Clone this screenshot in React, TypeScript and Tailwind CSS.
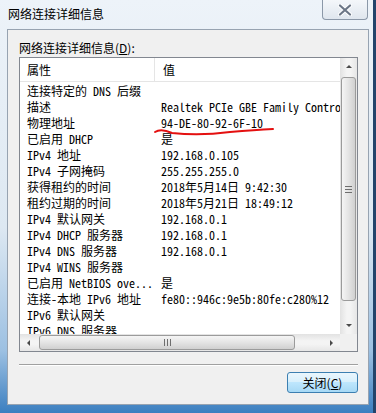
const rows: [string, string][] = [
  ["连接特定的 DNS 后缀", ""],
  ["描述", "Realtek PCIe GBE Family Controller"],
  ["物理地址", "94-DE-80-92-6F-10"],
  ["已启用 DHCP", "是"],
  ["IPv4 地址", "192.168.0.105"],
  ["IPv4 子网掩码", "255.255.255.0"],
  ["获得租约的时间", "2018年5月14日 9:42:30"],
  ["租约过期的时间", "2018年5月21日 18:49:12"],
  ["IPv4 默认网关", "192.168.0.1"],
  ["IPv4 DHCP 服务器", "192.168.0.1"],
  ["IPv4 DNS 服务器", "192.168.0.1"],
  ["IPv4 WINS 服务器", ""],
  ["已启用 NetBIOS ove...", "是"],
  ["连接-本地 IPv6 地址", "fe80::946c:9e5b:80fe:c280%12"],
  ["IPv6 默认网关", ""],
  ["IPv6 DNS 服务器", ""],
];

const ui = "font-['Noto_Sans_CJK_SC',sans-serif]";
const mono = "font-['Noto_Sans_Mono_CJK_SC','Noto_Sans_CJK_SC',monospace]";

function Arrow({ dir }: { dir: "up" | "down" | "left" | "right" }) {
  const pts = {
    up: "1,5 4,2 7,5",
    down: "1,2 4,5 7,2",
    left: "5,1 2,4 5,7",
    right: "2,1 5,4 2,7",
  }[dir];
  return (
    <svg width="8" height="8" viewBox="0 0 8 8">
      <polygon points={pts} fill="#4a4a4a" />
    </svg>
  );
}

export default function App() {
  return (
    <div
      className={`relative flex h-[413px] w-[376px] flex-col overflow-hidden border-r-[3px] border-r-[#23446b] bg-[linear-gradient(180deg,#edf3f9_0%,#dde8f2_55%,#9cc0e2_85%,#3c7fc0_100%)] ${ui}`}
    >
      {/* title bar */}
      <div className="flex h-[29px] shrink-0 items-start">
        <div className="pl-[8px] pt-[6px] text-[12px] leading-[16px] text-black">
          网络连接详细信息
        </div>
        <div className="ml-auto mr-[5px] flex h-[20px] w-[46px] items-center justify-center rounded-b-[4px] border border-t-0 border-[#8b98a8] bg-[linear-gradient(180deg,#f4f7fa,#dfe6ee)]">
          <svg width="16" height="12" viewBox="0 0 16 12">
            <path d="M3 1.5 L13 10.5 M13 1.5 L3 10.5" stroke="#ffffff" strokeWidth="4" strokeLinecap="round" />
            <path d="M3 1.5 L13 10.5 M13 1.5 L3 10.5" stroke="#6b7686" strokeWidth="2.2" strokeLinecap="round" />
          </svg>
        </div>
      </div>

      {/* client area */}
      <div className="mb-[8px] ml-[7px] mr-[4px] flex flex-1 flex-col border border-[#97a3b1] bg-[#f0f0f0] pl-[11px] pr-[10px]">
        <div className="mt-[10px] h-[15px] text-[12px] leading-[15px] text-black">
          网络连接详细信息(<span className="underline">D</span>):
        </div>

        {/* list view */}
        <div className="mt-[2px] flex h-[295px] flex-col border border-[#828790] bg-white">
          <div className="flex min-h-0 flex-1">
            <div className="flex min-w-0 flex-1 flex-col overflow-hidden">
              <div className="flex h-[24px] shrink-0 border-b border-[#e5e5e5] text-[12px] text-black">
                <div className="flex w-[135px] items-center border-r border-[#e5e5e5] pl-[7px]">属性</div>
                <div className="flex items-center pl-[8px]">值</div>
              </div>
              <div className={`pt-[1px] text-[12px] text-black ${mono}`}>
                {rows.map(([k, v], i) => (
                  <div key={i} className="flex h-[16px] leading-[16px]">
                    <div className="w-[135px] shrink-0 overflow-hidden whitespace-nowrap pl-[7px]">{k}</div>
                    <div className="overflow-hidden whitespace-nowrap pl-[6px]">{v}</div>
                  </div>
                ))}
              </div>
            </div>
            {/* vertical scrollbar */}
            <div className="flex w-[17px] shrink-0 flex-col bg-[linear-gradient(90deg,#e2e2e2,#f4f4f4_40%,#f4f4f4_60%,#e6e6e6)]">
              <div className="flex h-[17px] items-center justify-center">
                <Arrow dir="up" />
              </div>
              <div className="flex flex-1 flex-col px-[1px]">
                <div className="mt-[2px] flex h-[224px] items-center justify-center rounded-[3px] border border-[#9b9b9b] bg-[linear-gradient(90deg,#f5f5f5,#e4e4e4_50%,#d0d0d0)]">
                  <div className="flex flex-col gap-[2px]">
                    <div className="h-[1px] w-[7px] bg-[#6e6e6e]" />
                    <div className="h-[1px] w-[7px] bg-[#6e6e6e]" />
                    <div className="h-[1px] w-[7px] bg-[#6e6e6e]" />
                  </div>
                </div>
              </div>
              <div className="flex h-[17px] items-center justify-center">
                <Arrow dir="down" />
              </div>
            </div>
          </div>
          {/* horizontal scrollbar */}
          <div className="flex h-[17px] shrink-0">
            <div className="flex flex-1 bg-[linear-gradient(180deg,#e2e2e2,#f4f4f4_40%,#f4f4f4_60%,#e6e6e6)]">
              <div className="flex w-[17px] items-center justify-center">
                <Arrow dir="left" />
              </div>
              <div className="flex flex-1 py-[1px]">
                <div className="ml-[2px] flex w-[256px] items-center justify-center rounded-[3px] border border-[#9b9b9b] bg-[linear-gradient(180deg,#f5f5f5,#e4e4e4_50%,#d0d0d0)]">
                  <div className="flex gap-[2px]">
                    <div className="h-[7px] w-[1px] bg-[#6e6e6e]" />
                    <div className="h-[7px] w-[1px] bg-[#6e6e6e]" />
                    <div className="h-[7px] w-[1px] bg-[#6e6e6e]" />
                  </div>
                </div>
              </div>
              <div className="flex w-[17px] items-center justify-center">
                <Arrow dir="right" />
              </div>
            </div>
            <div className="w-[17px] bg-[#f0f0f0]" />
          </div>
        </div>

        {/* separator */}
        <div className="mt-[12px] h-[2px] border-y border-t-[#a0a0a0] border-b-white" />

        <div className="mt-[6px] flex justify-end">
          <div className="flex h-[21px] w-[71px] items-center justify-center rounded-[3px] border border-[#3c7fb1] bg-[linear-gradient(180deg,#eaf6fd_0%,#d9f0fc_45%,#bee6fd_50%,#a7d9f5_100%)] text-[12px] text-black">
            关闭(<span className="underline">C</span>)
          </div>
        </div>
      </div>

      {/* red hand-drawn underline */}
      <svg className="pointer-events-none absolute left-0 top-0" width="376" height="413">
        <path
          d="M155 132 Q161 128 172 133 Q200 136 230 132 Q255 130 273 129"
          fill="none"
          stroke="#e41010"
          strokeWidth="2"
          strokeLinecap="round"
        />
      </svg>
    </div>
  );
}
